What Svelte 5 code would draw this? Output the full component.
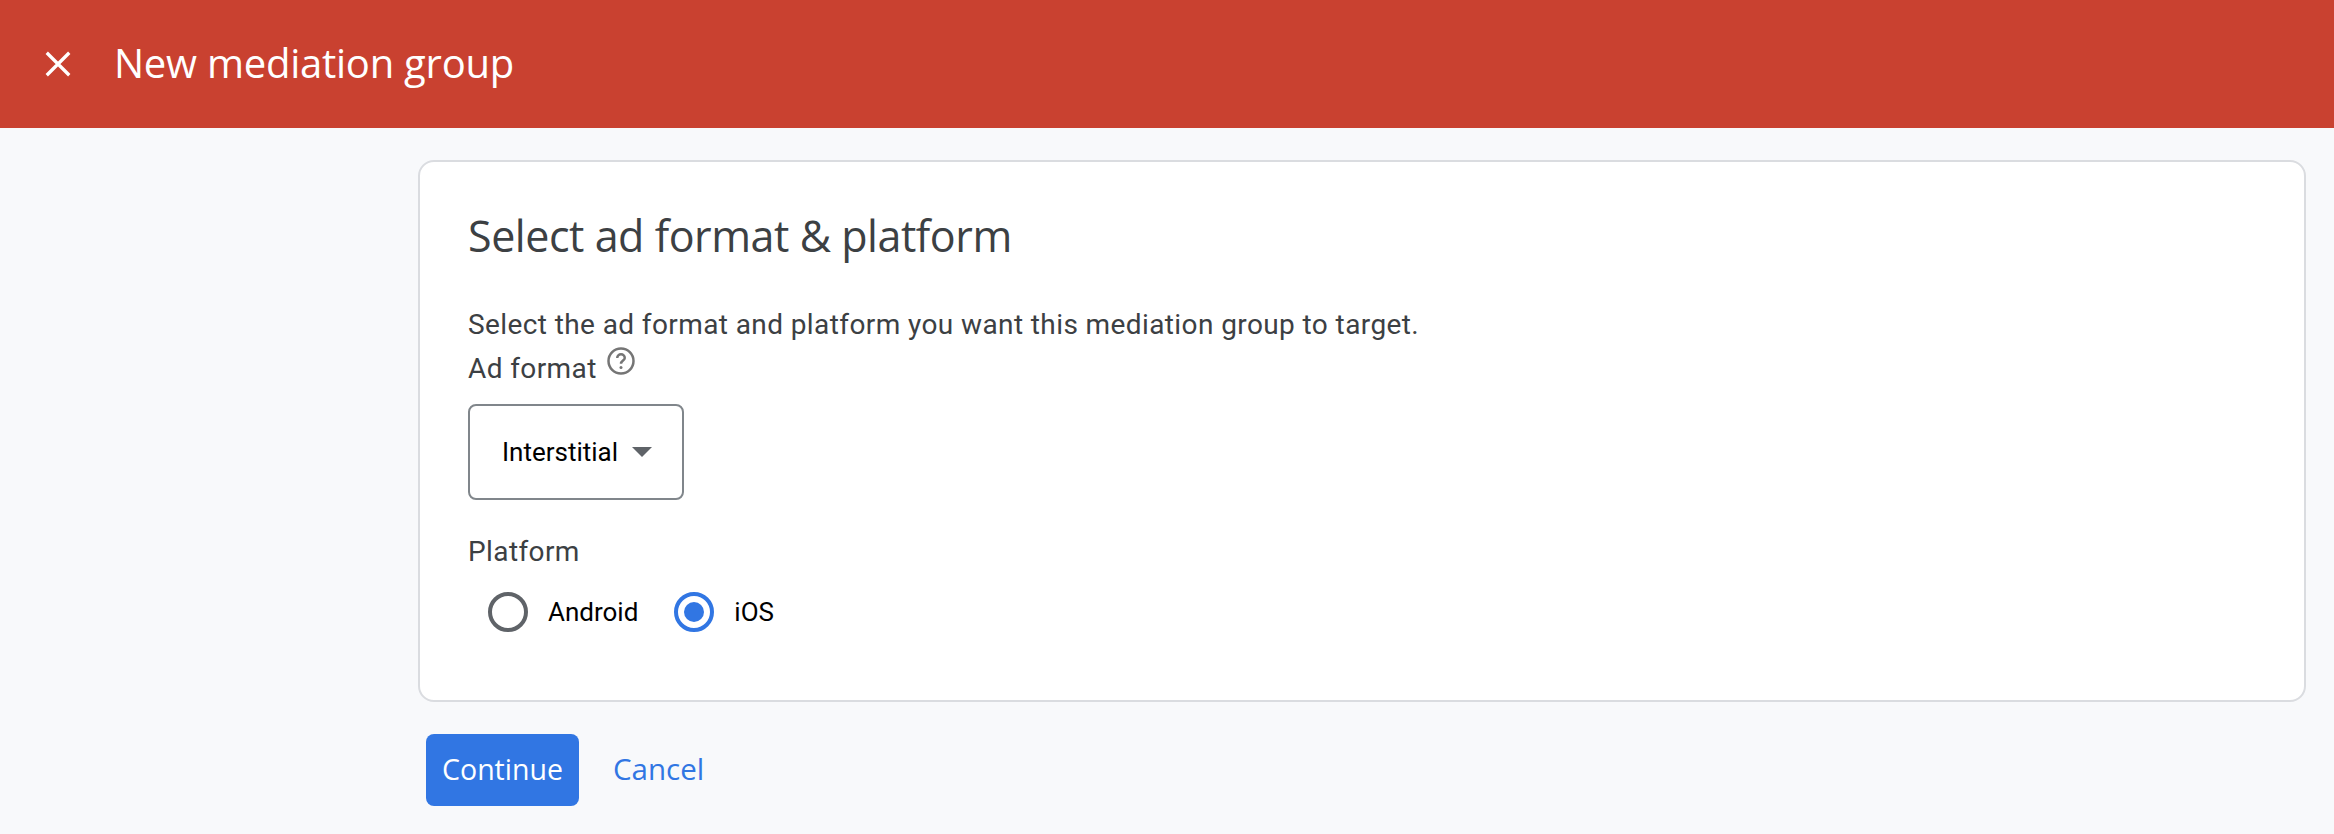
<script>
  let platform = $state('ios');
</script>

<header class="topbar">
  <button type="button" class="close" aria-label="Close">
    <svg viewBox="0 0 24 24" width="36" height="36"><path d="M4.5 4.5l15 15M19.5 4.5l-15 15" fill="none" stroke="#fff" stroke-width="2.2" /></svg>
  </button>
  <h1>New mediation group</h1>
</header>

<main class="page">
  <section class="card">
    <h2>Select ad format &amp; platform</h2>
    <p class="intro">Select the ad format and platform you want this mediation group to target.</p>
    <div class="field-label">
      <span>Ad format</span>
      <svg class="help" viewBox="0 0 24 24" width="30" height="30">
        <circle cx="12" cy="12" r="10" fill="none" stroke="#757575" stroke-width="2" />
        <path d="M9 9.6a3 3 0 0 1 6 0c0 2-3 2.2-3 4.6" fill="none" stroke="#757575" stroke-width="2" />
        <circle cx="12" cy="17.2" r="1.2" fill="#757575" />
      </svg>
    </div>
    <button type="button" class="select">
      <span>Interstitial</span>
      <i class="caret"></i>
    </button>
    <div class="platform-label">Platform</div>
    <div class="radios">
      <label class="radio">
        <input type="radio" name="platform" value="android" bind:group={platform} />
        <span class="dot"></span>
        <span>Android</span>
      </label>
      <label class="radio">
        <input type="radio" name="platform" value="ios" bind:group={platform} />
        <span class="dot"></span>
        <span>iOS</span>
      </label>
    </div>
  </section>
  <div class="actions">
    <button type="button" class="primary">Continue</button>
    <button type="button" class="link">Cancel</button>
  </div>
</main>

<style>
  :global(body) {
    background: #f8f9fb;
    font-family: Roboto, "Liberation Sans", sans-serif;
  }

  .topbar {
    height: 128px;
    background: #c94130;
    display: flex;
    align-items: center;
    color: #fff;
  }

  .close {
    width: 36px;
    height: 36px;
    margin-left: 40px;
    padding: 0;
    border: none;
    background: none;
    display: block;
  }

  .close svg {
    display: block;
  }

  h1 {
    margin: -3px 0 0 38px;
    font-family: "Open Sans", sans-serif;
    font-size: 40px;
    font-weight: 500;
    letter-spacing: -0.25px;
  }

  .page {
    box-sizing: border-box;
    height: 706px;
    padding: 32px 28px 0 418px;
  }

  .card {
    box-sizing: border-box;
    height: 542px;
    padding: 46px 48px 0;
    background: #fff;
    border: 2px solid #dadce0;
    border-radius: 16px;
  }

  h2 {
    margin: 0;
    font-family: "Open Sans", sans-serif;
    font-size: 43px;
    line-height: 56px;
    font-weight: 400;
    letter-spacing: -0.45px;
    color: #3c4043;
  }

  .intro {
    margin: 41px 0 0;
    font-size: 28px;
    line-height: 40px;
    letter-spacing: 0.4px;
    color: #3c4043;
  }

  .field-label {
    display: flex;
    align-items: flex-start;
    gap: 9px;
    height: 44px;
    margin-top: 2px;
    font-size: 28px;
    line-height: 44px;
    letter-spacing: 0.4px;
    color: #3c4043;
  }

  .help {
    margin-top: -1px;
  }

  .select {
    box-sizing: border-box;
    width: 216px;
    height: 96px;
    margin-top: 13px;
    padding: 0 30px 0 32px;
    display: flex;
    align-items: center;
    justify-content: space-between;
    background: #fff;
    border: 2px solid #80868b;
    border-radius: 8px;
    font: inherit;
    font-size: 26px;
    color: #000;
  }

  .caret {
    width: 0;
    height: 0;
    border-left: 10px solid transparent;
    border-right: 10px solid transparent;
    border-top: 10px solid #5f6368;
  }

  .platform-label {
    margin-top: 32px;
    font-size: 28px;
    line-height: 40px;
    letter-spacing: 0.4px;
    color: #3c4043;
  }

  .radios {
    display: flex;
    gap: 36px;
    margin-top: 20px;
    padding-left: 20px;
  }

  .radio {
    display: flex;
    align-items: center;
    gap: 20px;
    font-size: 26px;
    line-height: 40px;
    color: #000;
  }

  .radio input {
    position: absolute;
    opacity: 0;
  }

  .dot {
    box-sizing: border-box;
    width: 40px;
    height: 40px;
    border: 4px solid #5f6368;
    border-radius: 50%;
    display: grid;
    place-items: center;
  }

  .radio input:checked + .dot {
    border-color: #3176e3;
  }

  .radio input:checked + .dot::after {
    content: '';
    width: 20px;
    height: 20px;
    border-radius: 50%;
    background: #3176e3;
  }

  .actions {
    display: flex;
    align-items: center;
    gap: 34px;
    margin: 32px 0 0 8px;
  }

  .actions button {
    border: none;
    padding: 0 0 3px;
    font-family: "Open Sans", sans-serif;
    font-size: 28.5px;
    font-weight: 500;
  }

  .primary {
    width: 153px;
    height: 72px;
    background: #3176e3;
    border-radius: 8px;
    color: #fff;
  }

  .actions .link {
    background: none;
    color: #3176e3;
    font-size: 29.5px;
  }
</style>
